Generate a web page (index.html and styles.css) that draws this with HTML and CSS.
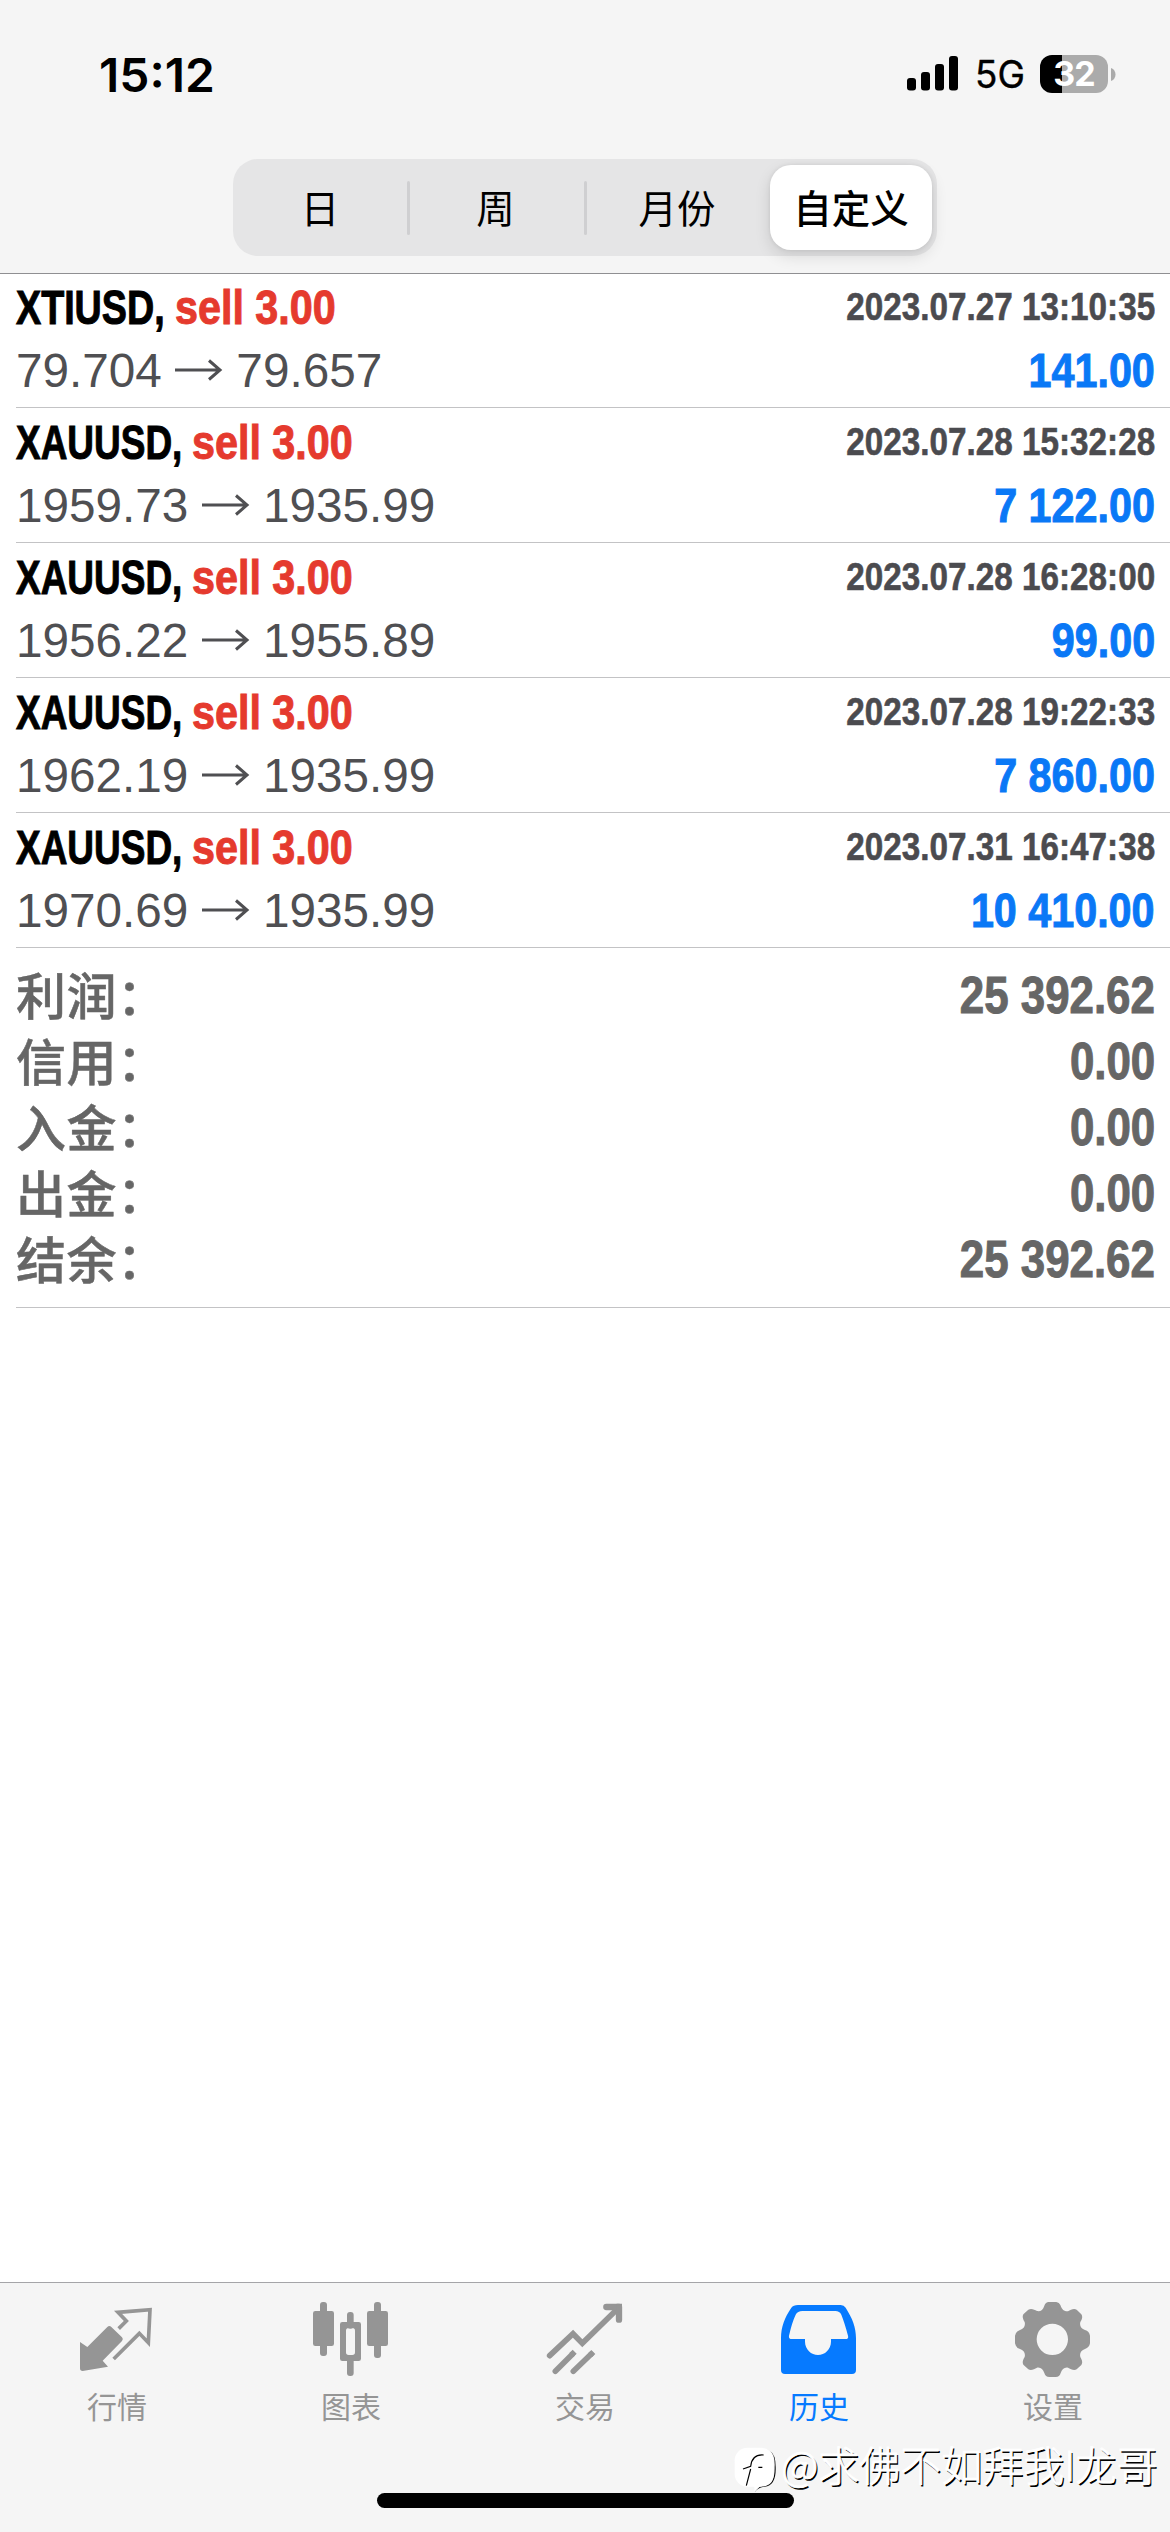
FILE: index.html
```html
<!DOCTYPE html>
<html lang="zh-CN">
<head>
<meta charset="utf-8">
<title>历史</title>
<link rel="stylesheet" href="styles.css">
</head>
<body>
<div class="screen">
  <header class="header">
    <div class="status">
      <span class="time">15:12</span>
      <div class="indicators">
        <svg class="signal" viewBox="0 0 52 35" width="52" height="35"><rect x="0" y="22" width="9" height="12.500" rx="3"/><rect x="14" y="16" width="9" height="18.500" rx="3"/><rect x="28" y="8" width="9" height="26.500" rx="3"/><rect x="42" y="0" width="9" height="34.500" rx="3"/></svg>
        <span class="network">5G</span>
        <div class="battery"><span class="battery-level">32</span></div>
        <svg class="battery-cap" viewBox="0 0 5 13" width="5" height="13"><path d="M0 0C6 2 6 11 0 13Z"/></svg>
      </div>
    </div>
    <nav class="segments">
      <span class="segment">日</span>
      <span class="segment divided">周</span>
      <span class="segment divided">月份</span>
      <span class="segment selected">自定义</span>
    </nav>
  </header>

  <main class="content">
    <article class="deal">
      <div class="line"><span class="symbol xti">XTIUSD,</span><span class="action">sell 3.00</span><span class="date">2023.07.27 13:10:35</span></div>
      <div class="line"><span class="prices">79.704 <svg class="arrow" viewBox="0 0 48 22"><path d="M0 11H45M34 1.500L45 11L34 20.500"/></svg> 79.657</span><span class="profit">141.00</span></div>
    </article>
    <article class="deal">
      <div class="line"><span class="symbol">XAUUSD,</span><span class="action">sell 3.00</span><span class="date">2023.07.28 15:32:28</span></div>
      <div class="line"><span class="prices">1959.73 <svg class="arrow" viewBox="0 0 48 22"><path d="M0 11H45M34 1.500L45 11L34 20.500"/></svg> 1935.99</span><span class="profit">7 122.00</span></div>
    </article>
    <article class="deal">
      <div class="line"><span class="symbol">XAUUSD,</span><span class="action">sell 3.00</span><span class="date">2023.07.28 16:28:00</span></div>
      <div class="line"><span class="prices">1956.22 <svg class="arrow" viewBox="0 0 48 22"><path d="M0 11H45M34 1.500L45 11L34 20.500"/></svg> 1955.89</span><span class="profit">99.00</span></div>
    </article>
    <article class="deal">
      <div class="line"><span class="symbol">XAUUSD,</span><span class="action">sell 3.00</span><span class="date">2023.07.28 19:22:33</span></div>
      <div class="line"><span class="prices">1962.19 <svg class="arrow" viewBox="0 0 48 22"><path d="M0 11H45M34 1.500L45 11L34 20.500"/></svg> 1935.99</span><span class="profit">7 860.00</span></div>
    </article>
    <article class="deal">
      <div class="line"><span class="symbol">XAUUSD,</span><span class="action">sell 3.00</span><span class="date">2023.07.31 16:47:38</span></div>
      <div class="line"><span class="prices">1970.69 <svg class="arrow" viewBox="0 0 48 22"><path d="M0 11H45M34 1.500L45 11L34 20.500"/></svg> 1935.99</span><span class="profit">10 410.00</span></div>
    </article>
    <section class="summary">
      <div class="total"><span class="label">利润：</span><span class="amount">25 392.62</span></div>
      <div class="total"><span class="label">信用：</span><span class="amount">0.00</span></div>
      <div class="total"><span class="label">入金：</span><span class="amount">0.00</span></div>
      <div class="total"><span class="label">出金：</span><span class="amount">0.00</span></div>
      <div class="total"><span class="label">结余：</span><span class="amount">25 392.62</span></div>
    </section>
  </main>

  <footer class="tabs">
    <a class="tab">
      <svg class="icon" viewBox="234 93 234 234"><path d="M240 216L262 231L322 171Q328 165 334 171L366 202Q371 207 366 213L308 272L324 290L248 303Q240 303 240 295Z"/><path class="stroke" stroke-width="11" d="M356 176L379 153L354 127L450 119L445 218L418 190L341 267"/></svg>
      <span>行情</span>
    </a>
    <a class="tab">
      <svg class="icon" viewBox="936 93 234 234"><rect x="960" y="96" width="21" height="162" rx="9"/><rect x="939" y="123" width="63" height="105" rx="7"/><rect x="1122" y="96" width="21" height="168" rx="9"/><rect x="1101" y="123" width="63" height="105" rx="7"/><rect x="1041" y="126" width="20" height="50" rx="9"/><rect x="1041" y="262" width="20" height="56" rx="9"/><path fill-rule="evenodd" d="M1027 156H1076Q1083 156 1083 163V266Q1083 273 1076 273H1027Q1020 273 1020 266V163Q1020 156 1027 156ZM1046 174Q1038 174 1038 182V247Q1038 255 1046 255H1057Q1065 255 1065 247V182Q1065 174 1057 174Z"/></svg>
      <span>图表</span>
    </a>
    <a class="tab">
      <svg class="icon" viewBox="378 93 234 234"><path class="stroke round" stroke-width="17" d="M389 257L459 191L487 220L596 113M406 304L457 253M460 304L513 253"/><path class="stroke round" stroke-width="19" stroke-linejoin="round" d="M559 111H597V149"/><path d="M448 249L458 239L470 251L460 261ZM505 249L514 240L526 252L516 262ZM590 101H606V120H590Z"/></svg>
      <span>交易</span>
    </a>
    <a class="tab active">
      <svg class="icon" viewBox="240 93 234 234"><path fill-rule="evenodd" d="M294 105H422Q432 105 437 113C457 145 468 170 468 205V300Q468 312 456 312H255Q243 312 243 300V205C243 170 254 143 274 113Q280 105 294 105ZM307 123Q293 123 287 134Q276 157 267 197Q265 207 276 207H315V215C315 238 334 255 354 255C374 255 393 238 393 215V207H436Q447 207 444 197Q434 159 424 134Q419 123 406 123Z"/></svg>
      <span>历史</span>
    </a>
    <a class="tab">
      <svg class="icon" viewBox="942 93 234 234"><path fill-rule="evenodd" d="M1046 96H1069Q1078 97 1081 105C1086 120 1094 125 1104 124C1112 119 1122 114 1130 119L1144 133C1149 140 1146 148 1141 156C1138 168 1144 176 1155 180Q1168 184 1170 197V220Q1168 233 1155 237C1144 241 1138 249 1141 261C1146 270 1149 278 1144 285L1130 298C1122 302 1112 298 1104 293C1093 291 1086 298 1082 309Q1079 321 1067 321H1048Q1036 321 1033 309C1029 298 1022 291 1011 293C1003 298 993 302 985 298L970 284C966 277 969 269 974 261C977 249 971 241 960 237Q947 233 945 220V197Q947 184 960 180C971 176 977 168 974 156C969 148 966 140 970 133L985 119C993 114 1003 118 1011 123C1021 125 1029 120 1033 107Q1037 96 1046 96ZM1057 161A47 47 0 1 0 1057 255A47 47 0 1 0 1057 161Z"/></svg>
      <span>设置</span>
    </a>
  </footer>
  <div class="home-bar"></div>
  <div class="watermark">
    <svg class="mark" viewBox="0 0 126 138"><path fill="#000" d="M108 12Q124 24 122 60Q123 112 94 116Q68 118 62 136Q70 122 92 119Q127 116 125 60Q125 22 108 12Z"/><rect x="2" y="2" width="117" height="117" rx="38" fill="#fff"/><path fill="#fff" d="M60 112H84L62 134Z"/><path fill="none" stroke="#000" stroke-width="3.500" d="M89 24C67 22 53 32 50 58L27 66M50 66L37 116M73 61H85"/></svg>
    <span class="author">@求佛不如拜我I龙哥</span>
  </div>
</div>
</body>
</html>
```
FILE: styles.css
```css
* { box-sizing: border-box; }
body { margin: 0; background: #fff; }
.screen {
  position: relative;
  width: 1170px;
  height: 2532px;
  display: flex;
  flex-direction: column;
  overflow: hidden;
  background: #fff;
  font-family: "Liberation Sans", "Noto Sans CJK SC", sans-serif;
}
.header {
  height: 274px;
  flex: none;
  background: #f5f5f5;
  border-bottom: 1px solid #8f8f92;
}
.status {
  height: 159px;
  padding: 55px 54px 0 99px;
  display: flex;
  justify-content: space-between;
  font-family: Inter, sans-serif;
}
.time {
  height: 40px;
  line-height: 40px;
  font-size: 47px;
  font-weight: 600;
  transform-origin: 0 50%;
  transform: scaleX(1.02);
}
.indicators { display: flex; height: 38px; align-items: center; }
.signal { display: block; margin-top: -1px; }
.network {
  width: 65px;
  margin-left: 16px;
  font-size: 38px;
  line-height: 40px;
  white-space: nowrap;
  -webkit-text-stroke: .4px #000;
  transform-origin: 0 50%;
  transform: scaleX(.97);
}
.battery {
  width: 68px;
  height: 38px;
  border-radius: 12px;
  background: linear-gradient(90deg, #000 22px, #ababab 22px);
  text-align: center;
}
.battery-level { color: #fff; font-size: 34px; line-height: 38px; font-weight: 700; letter-spacing: -1px; }
.battery-cap { margin-left: 3px; fill: #ababab; }
.segments {
  width: 704px;
  height: 97px;
  margin: 0 auto;
  padding: 6px 5px 6px 0;
  display: grid;
  grid-template-columns: 174px 177px 186px 162px;
  border-radius: 25px;
  background: #e5e5e6;
  font-family: "Noto Sans CJK SC", sans-serif;
  font-size: 38.500px;
  line-height: 82px;
}
.segment { position: relative; text-align: center; }
.segment.divided::before {
  content: "";
  position: absolute;
  left: 0;
  top: 16px;
  width: 3px;
  height: 54px;
  border-radius: 2px;
  background: #cfcfd1;
}
.segment.selected {
  border-radius: 21px;
  background: #fff;
  font-weight: 500;
  box-shadow: 0 6px 16px rgba(0,0,0,.12), 0 0 4px rgba(0,0,0,.08);
}
.content { flex: 1; padding-left: 16px; }
.deal { height: 135px; padding-top: 3px; border-bottom: 1px solid #c3c3c5; }
.deal:first-child { margin-top: -1px; }
.line { height: 63px; line-height: 63px; padding-right: 15px; display: flex; white-space: nowrap; }
.symbol, .action, .date, .profit, .amount {
  font-weight: 700;
  transform-origin: 0 50%;
  -webkit-text-stroke: 1px currentColor;
}
.symbol { width: 175.500px; font-size: 48px; color: #000; transform: scaleX(.77); }
.symbol.xti { width: 159px; transform: scaleX(.785); }
.action { font-size: 48px; color: #e53a2e; transform: scaleX(.86); }
.date, .profit, .amount { margin-left: auto; transform-origin: 100% 50%; transform: scaleX(.86); }
.date { font-size: 39px; line-height: 62px; color: #4b4b4f; transform: scaleX(.853); -webkit-text-stroke-width: .6px; }
.prices { font-size: 47.700px; color: #4f4f52; }
.arrow { width: 48px; height: 22px; vertical-align: 6px; fill: none; stroke: #4f4f52; stroke-width: 3; }
.profit { font-size: 48px; color: #0a78f6; }
.summary { height: 360px; padding-top: 15px; border-bottom: 1px solid #c3c3c5; }
.total { height: 66px; line-height: 66px; padding-right: 15px; display: flex; color: #666; }
.label {
  font-family: "Noto Sans CJK SC", sans-serif;
  font-size: 50px;
  line-height: 61px;
  font-weight: 500;
  letter-spacing: .5px;
  -webkit-text-stroke: .5px currentColor;
}
.amount { font-size: 51px; }
.tabs {
  height: 250px;
  flex: none;
  padding-top: 18px;
  display: grid;
  grid-template-columns: repeat(5, 1fr);
  background: #f5f5f5;
  border-top: 1px solid #a5a5a8;
}
.tab {
  display: flex;
  flex-direction: column;
  align-items: center;
  color: #959595;
  font: 30px/44px "Noto Sans CJK SC", sans-serif;
}
.tab.active { color: #067aff; }
.tab span { margin-top: 4px; }
.icon { width: 78px; height: 78px; fill: currentColor; }
.stroke { fill: none; stroke: currentColor; }
.round { stroke-linecap: round; }
.home-bar { position: absolute; left: 377px; top: 2493px; width: 417px; height: 15px; border-radius: 8px; background: #000; }
.watermark { position: absolute; left: 734px; top: 2440px; display: flex; height: 54px; color: #fff; }
.mark { width: 42px; height: 46px; margin-top: 7px; }
.author {
  margin-left: 5px;
  font: 300 41px/46px "Noto Sans CJK SC", sans-serif;
  white-space: nowrap;
  -webkit-text-stroke: .8px #fff;
  text-shadow: 1.500px 1.500px 0 #000;
}
```
